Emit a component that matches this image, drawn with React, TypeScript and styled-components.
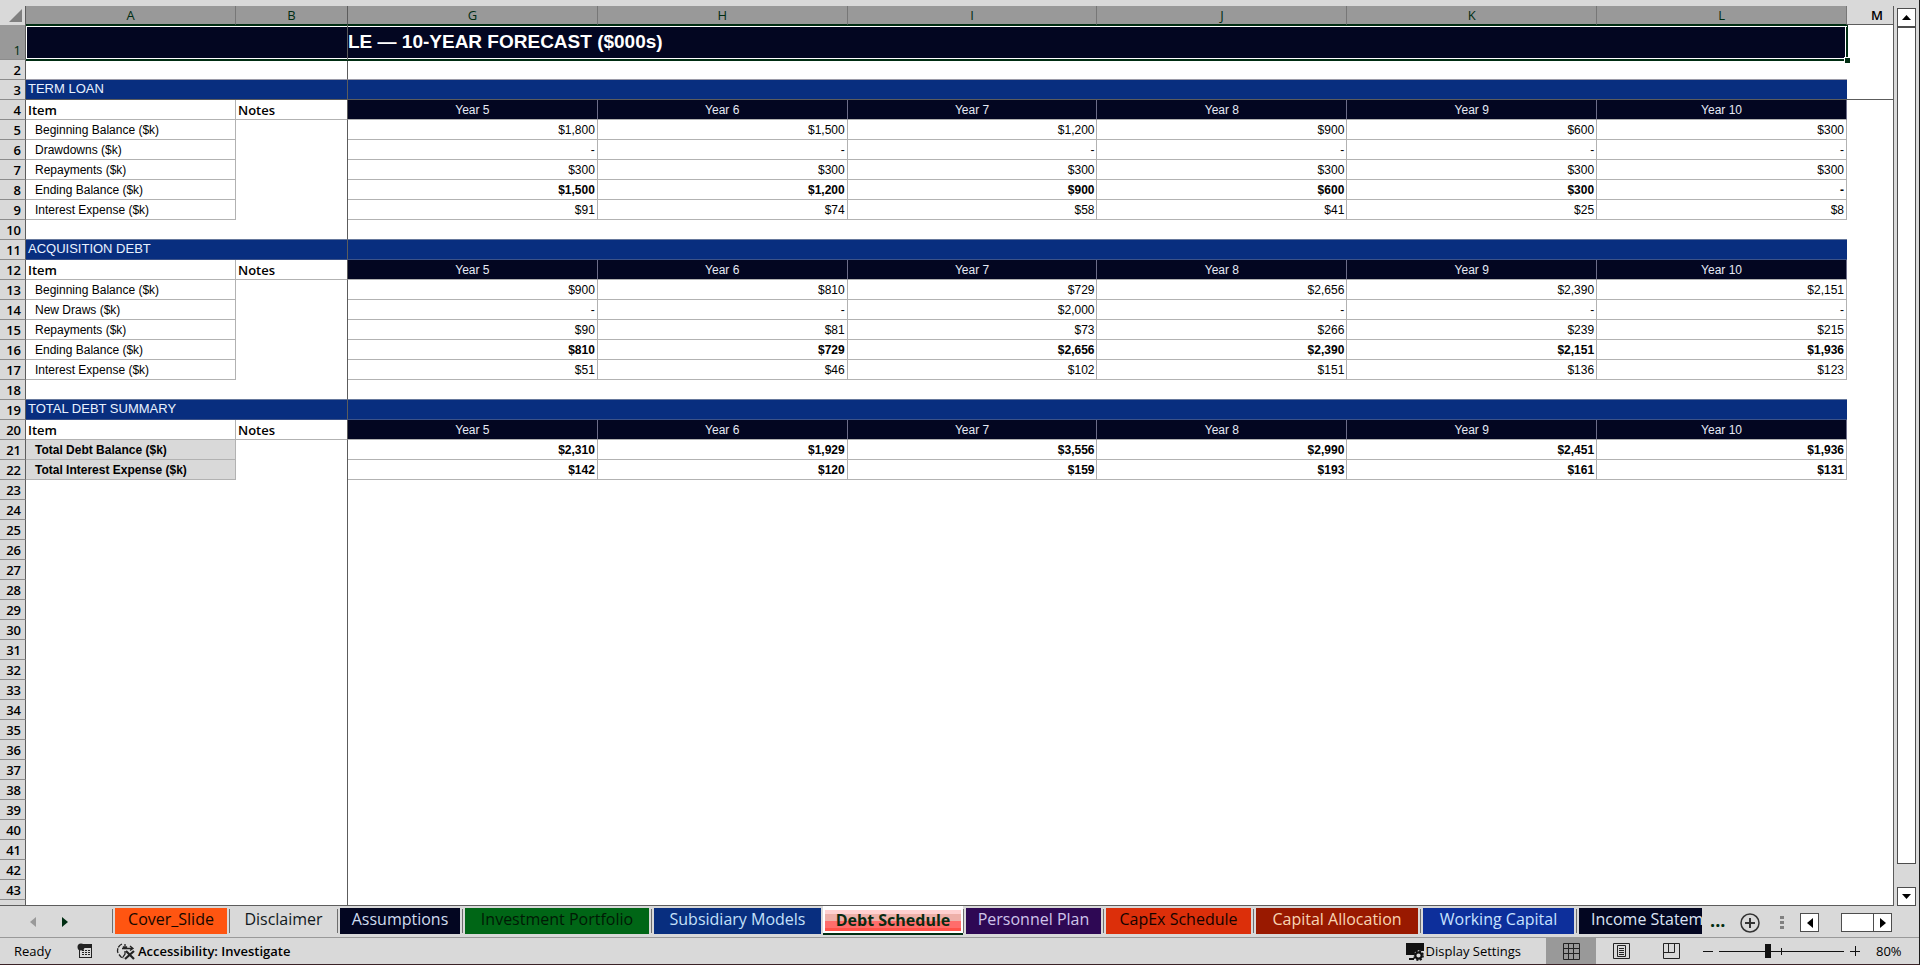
import React from "react";
import styled, { createGlobalStyle } from "styled-components";

const C = {
  chrome: "#d9d9d9",
  head: "#999999",
  navy: "#030621",
  blue: "#082e7f",
  green: "#002d12",
  grid: "#b2b2b2",
  dark: "#5c5c5c",
};
const UI = `"Open Sans", "Noto Sans", sans-serif`;
const CELL = `"Liberation Sans", Arial, sans-serif`;

const GlobalStyle = createGlobalStyle`
  * { box-sizing: border-box; }
  html, body, #root { height: 100%; }
  body { margin: 0; background: ${C.chrome}; font-family: ${UI}; color: #000; overflow: hidden; }
  button { font: inherit; color: inherit; border: 0; padding: 0; background: none; }
`;

const Window = styled.div`
  height: 100vh;
  display: flex;
  flex-direction: column;
  background: ${C.chrome};
  border-right: 1px solid #1c1c1c;
  border-bottom: 1px solid #3a2226;
`;
const Workspace = styled.main`
  flex: 1;
  min-height: 0;
  display: flex;
  padding-top: 6px;
`;
const SheetPane = styled.div`
  flex: 1;
  min-width: 0;
  overflow: hidden;
  border-right: 1px solid ${C.dark};
  border-bottom: 1px solid ${C.dark};
  background: linear-gradient(${C.chrome} 19px, #fff 19px);
`;
const Sheet = styled.table`
  width: 100%;
  table-layout: fixed;
  border-collapse: separate;
  border-spacing: 0;
  font: 12px/18px ${CELL};
`;
const Corner = styled.th`
  height: 19px;
  padding: 0 3px 1px 0;
  background: ${C.chrome};
  border-right: 1px solid ${C.dark};
  text-align: right;
  svg { display: block; margin-left: auto; }
`;
const ColHead = styled.th<{ $on?: boolean; $freeze?: boolean }>`
  height: 19px;
  padding: 1px 0 0 ${(p) => (p.$on ? 0 : 14)}px;
  font: ${(p) => (p.$on ? 400 : 600)} 13px/17px ${UI};
  color: ${(p) => (p.$on ? C.green : "#000")};
  background: ${(p) => (p.$on ? C.head : C.chrome)};
  border-right: ${(p) => (p.$on ? `1px solid ${p.$freeze ? C.dark : "#777"}` : 0)};
  border-bottom: 1px solid ${(p) => (p.$on ? C.green : C.dark)};
`;
const RowHead = styled.th<{ $on?: boolean }>`
  height: ${(p) => (p.$on ? 35 : 20)}px;
  padding: 0 4px 0 0;
  text-align: right;
  vertical-align: bottom;
  font: ${(p) => (p.$on ? 400 : 600)} 13px/18px ${UI};
  color: ${(p) => (p.$on ? C.green : "#000")};
  background: ${(p) => (p.$on ? C.head : C.chrome)};
  border-right: 1px solid ${C.dark};
  border-bottom: 1px solid #8c8c8c;
`;
const Cell = styled.td<{
  $lines?: boolean; $freeze?: boolean; $bold?: boolean; $num?: boolean; $indent?: boolean; $shade?: boolean; $under?: string;
}>`
  height: 20px;
  padding: 1px ${(p) => (p.$num ? 2 : 0)}px 0 ${(p) => (p.$indent ? 9 : 2)}px;
  overflow: hidden;
  white-space: nowrap;
  text-align: ${(p) => (p.$num ? "right" : "left")};
  font-weight: ${(p) => (p.$bold ? 700 : 400)};
  background: ${(p) => (p.$shade ? "#d9d9d9" : "#fff")};
  border-right: ${(p) => (p.$freeze ? `1px solid ${C.dark}` : p.$lines ? `1px solid ${C.grid}` : 0)};
  border-bottom: ${(p) => (p.$under ? `1px solid ${p.$under}` : p.$lines ? `1px solid ${C.grid}` : 0)};
`;
const ItemHead = styled.th<{ $freeze?: boolean }>`
  padding: 1px 0 0 2px;
  text-align: left;
  font: 600 13px/18px ${UI};
  background: #fff;
  border-right: 1px solid ${(p) => (p.$freeze ? C.dark : C.grid)};
  border-bottom: 1px solid ${C.grid};
`;
const YearHead = styled.th`
  padding: 1px 0 0;
  font-weight: 400;
  color: #e6eaf5;
  background: ${C.navy};
  border-right: 1px solid #6c6c88;
  border-bottom: 1px solid ${C.grid};
`;
const Section = styled.td<{ $freeze?: boolean; $cut?: boolean }>`
  padding: 0 0 1px 2px;
  font: 13px/18px ${CELL};
  color: #e8f2ff;
  background: ${C.blue};
  border-right: ${(p) => (p.$freeze ? `1px solid ${C.dark}` : 0)};
  border-bottom: 1px solid ${(p) => (p.$cut ? C.dark : "#3d5388")};
`;
const Title = styled.td<{ $side: "left" | "right" }>`
  position: relative;
  height: 35px;
  padding: 0;
  font: 700 19px/34px ${CELL};
  color: #fff;
  background: ${C.navy};
  vertical-align: top;
  border-right: ${(p) => (p.$side === "left" ? `1px solid ${C.dark}` : 0)};
  box-shadow:
    inset 0 1px 0 ${C.green}, inset 0 2px 0 #fff,
    0 1px 0 ${C.green}, inset 0 -1px 0 ${C.green}, inset 0 -2px 0 #fff,
    ${(p) => (p.$side === "left" ? "inset 1px 0 0 #fff" : `inset -1px 0 0 ${C.green}, inset -2px 0 0 #fff, 1px 0 0 ${C.green}`)};
  z-index: 1;
`;
const FillHandle = styled.span`
  position: absolute;
  right: -3px;
  bottom: -3px;
  width: 6px;
  height: 6px;
  background: ${C.green};
  border-top: 1px solid #fff;
  border-left: 1px solid #fff;
`;

const VScroll = styled.div`
  width: 25px;
  padding: 2px 3px 0;
  display: flex;
  flex-direction: column;
`;
const ArrowBtn = styled.button`
  width: 19px;
  height: 19px;
  flex: none;
  display: grid;
  place-items: center;
  background: #fff;
  border: 1px solid #4d4d4d;
`;
const Thumb = styled.div`
  flex: 1;
  width: 19px;
  background: #fff;
  border: 1px solid #4d4d4d;
  margin-bottom: 23px;
`;

const TabBar = styled.nav`
  height: 32px;
  display: flex;
  align-items: flex-start;
  border-bottom: 1px solid #999;
`;
const TabNav = styled.div`
  flex: none;
  width: 112px;
  height: 32px;
  padding: 0 0 0 30px;
  display: flex;
  gap: 26px;
  align-items: center;
  button { display: grid; }
`;
const Tabs = styled.div`
  flex: 1 1 0;
  min-width: 0;
  display: flex;
  overflow: hidden;
`;
const TabSlot = styled.div<{ $w: number; $bare?: boolean }>`
  flex: none;
  width: ${(p) => p.$w}px;
  height: 30px;
  padding: ${(p) => (p.$bare ? "0" : "2px 2px 0 3px")};
  background: linear-gradient(#6e6e6e, #6e6e6e) left 3px / 1px 24px no-repeat;
`;
const Tab = styled.button<{ $bg: string; $fg: string; $clip?: boolean }>`
  width: 100%;
  height: 26px;
  overflow: hidden;
  white-space: nowrap;
  text-align: ${(p) => (p.$clip ? "left" : "center")};
  font: 16px/22px ${UI};
  padding: 0 0 4px ${(p) => (p.$clip ? 12 : 0)}px;
  color: ${(p) => p.$fg};
  background: ${(p) => p.$bg};
`;
const ActiveTab = styled.button`
  width: 100%;
  height: 28px;
  margin-top: -1px;
  padding-bottom: 2px;
  font: 700 16px/18px ${UI};
  color: #092b12;
  background: linear-gradient(#ffd0d0 4px, #eeb0a9 4px 11px, #ff6d6b 11px 18px, #ff5148 18px);
  background-clip: padding-box;
  border: 2px solid #fff;
  border-top-width: 5px;
  border-bottom-width: 2px;
  box-shadow: 0 2px 0 ${C.green};
  white-space: nowrap;
`;
const TabTools = styled.div`
  flex: none;
  width: 217px;
  height: 31px;
  padding: 2px 0 0 8px;
  display: flex;
  align-items: center;
`;
const More = styled.button`
  width: 30px;
  padding-bottom: 6px;
  text-align: left;
  font: 700 18px/20px ${UI};
  color: ${C.green};
`;
const RoundBtn = styled.button`
  display: grid;
`;
const Dots = styled.span`
  display: grid;
  width: 40px;
  padding-left: 20px;
`;
const HTrack = styled.div`
  flex: none;
  display: flex;
  margin-left: 22px;
`;
const HThumb = styled.div`
  width: 32px;
  height: 19px;
  background: #fff;
  border: 1px solid #4d4d4d;
  border-right: 0;
`;

const Status = styled.footer`
  height: 26px;
  display: flex;
  align-items: center;
  font: 13px/20px ${UI};
`;
const Ready = styled.span`
  width: 77px;
  padding-left: 14px;
`;
const StatusBtn = styled.button<{ $bold?: boolean }>`
  display: flex;
  align-items: center;
  gap: 2px;
  font-weight: ${(p) => (p.$bold ? 600 : 400)};
  margin-left: ${(p) => (p.$bold ? 23 : 0)}px;
  white-space: nowrap;
`;
const Spacer = styled.div`
  flex: 1;
`;
const Views = styled.div`
  display: flex;
  align-self: stretch;
  margin-left: 25px;
`;
const ViewBtn = styled.button<{ $on?: boolean }>`
  width: 50px;
  display: grid;
  place-items: center;
  background: ${(p) => (p.$on ? C.head : "transparent")};
`;
const Zoom = styled.div`
  display: flex;
  align-items: center;
  gap: 6px;
  margin-left: 7px;
  button { display: grid; }
  input {
    appearance: none;
    width: 125px;
    height: 15px;
    margin: 0;
    background:
      linear-gradient(#111, #111) 62px center / 1px 7px no-repeat,
      linear-gradient(#111, #111) center / 100% 1px no-repeat;
  }
  input::-webkit-slider-thumb {
    appearance: none;
    width: 6px;
    height: 14px;
    background: #111;
  }
`;
const Percent = styled.button`
  width: 59px;
  text-align: left;
  padding-left: 16px;
`;

type Dir = "up" | "down" | "left" | "right";
const shapes: Record<Dir, [number, number, string]> = {
  up: [9, 5, "M0 5L4.5 0L9 5Z"],
  down: [9, 5, "M0 0L4.5 5L9 0Z"],
  left: [6, 10, "M6 0L0 5L6 10Z"],
  right: [6, 10, "M0 0L6 5L0 10Z"],
};
const Arrow = ({ dir, color = "#000" }: { dir: Dir; color?: string }) => {
  const [w, h, d] = shapes[dir];
  return <svg width={w} height={h} viewBox={`0 0 ${w} ${h}`}><path d={d} fill={color} /></svg>;
};

const MacroIcon = () => (
  <svg width="16" height="16" viewBox="0 0 16 16">
    <rect x="2.5" y="2.5" width="12" height="12" fill="none" stroke="#222" />
    <rect x="5" y="1" width="10" height="4" fill="#222" />
    <circle cx="4" cy="4" r="3.5" fill="#222" />
    <path d="M5 7.5h2m1 0h2m1 0h2M5 9.500h2m1 0h2m1 0h2M5 11.500h2m1 0h2m1 0h2" stroke="#222" />
  </svg>
);
const AccessIcon = () => (
  <svg width="20" height="18" viewBox="0 0 20 18" fill="none" stroke="#222" strokeWidth="1.3">
    <path d="M6 2A7 7 0 0 0 2 11M3 12.500l2 2.500l3 1" strokeDasharray="5 1" />
    <path d="M6 6.500h11M9 2v4M7 4.500l2 2l2-2M14 4l3 2.500l-3 2M9 9v3l-2 3" />
    <path d="M10 9l8 8M18 9l-9 8" strokeWidth="2.200" />
  </svg>
);
const DisplayIcon = () => (
  <svg width="19" height="19" viewBox="0 0 19 19">
    <path d="M1 1h18v8h-3l-2-1l-4 2l-1 3H1Z" fill="#111" />
    <path d="M4 17h5" stroke="#111" strokeWidth="2" />
    <circle cx="13.500" cy="13.500" r="3.200" fill="none" stroke="#111" strokeWidth="2.200" />
    <circle cx="13.500" cy="13.500" r="4.600" fill="none" stroke="#111" strokeWidth="1.600" strokeDasharray="2.100 1.510" />
  </svg>
);

const years = ["Year 5", "Year 6", "Year 7", "Year 8", "Year 9", "Year 10"];
type Line = { label: string; values: string[]; bold?: boolean; shade?: boolean };
type Block = { name: string; start: number; lines: Line[] };
const blocks: Block[] = [
  {
    name: "TERM LOAN", start: 3, lines: [
      { label: "Beginning Balance ($k)", values: ["$1,800", "$1,500", "$1,200", "$900", "$600", "$300"] },
      { label: "Drawdowns ($k)", values: ["-", "-", "-", "-", "-", "-"] },
      { label: "Repayments ($k)", values: ["$300", "$300", "$300", "$300", "$300", "$300"] },
      { label: "Ending Balance ($k)", values: ["$1,500", "$1,200", "$900", "$600", "$300", "-"], bold: true },
      { label: "Interest Expense ($k)", values: ["$91", "$74", "$58", "$41", "$25", "$8"] },
    ],
  },
  {
    name: "ACQUISITION DEBT", start: 11, lines: [
      { label: "Beginning Balance ($k)", values: ["$900", "$810", "$729", "$2,656", "$2,390", "$2,151"] },
      { label: "New Draws ($k)", values: ["-", "-", "$2,000", "-", "-", "-"] },
      { label: "Repayments ($k)", values: ["$90", "$81", "$73", "$266", "$239", "$215"] },
      { label: "Ending Balance ($k)", values: ["$810", "$729", "$2,656", "$2,390", "$2,151", "$1,936"], bold: true },
      { label: "Interest Expense ($k)", values: ["$51", "$46", "$102", "$151", "$136", "$123"] },
    ],
  },
  {
    name: "TOTAL DEBT SUMMARY", start: 19, lines: [
      { label: "Total Debt Balance ($k)", values: ["$2,310", "$1,929", "$3,556", "$2,990", "$2,451", "$1,936"], bold: true, shade: true },
      { label: "Total Interest Expense ($k)", values: ["$142", "$120", "$159", "$193", "$161", "$131"], bold: true, shade: true },
    ],
  },
];

const BlankRow = ({ n, under }: { n?: number; under?: string }) => (
  <tr>
    <RowHead scope="row">{n}</RowHead>
    <Cell colSpan={2} $freeze $under={under} />
    <Cell colSpan={6} $under={under} />
    <Cell />
  </tr>
);

const BlockRows = ({ block }: { block: Block }) => (
  <>
    <tr>
      <RowHead scope="row">{block.start}</RowHead>
      <Section colSpan={2} $freeze $cut={block.start === 3}>{block.name}</Section>
      <Section colSpan={6} $cut={block.start === 3} />
      <Cell $under={block.start === 3 ? C.dark : undefined} />
    </tr>
    <tr>
      <RowHead scope="row">{block.start + 1}</RowHead>
      <ItemHead>Item</ItemHead>
      <ItemHead $freeze>Notes</ItemHead>
      {years.map((y) => <YearHead key={y}>{y}</YearHead>)}
      <Cell />
    </tr>
    {block.lines.map((l, i) => (
      <tr key={l.label}>
        <RowHead scope="row">{block.start + 2 + i}</RowHead>
        <Cell $lines $indent $bold={l.shade} $shade={l.shade}>{l.label}</Cell>
        <Cell $freeze />
        {l.values.map((v, j) => <Cell key={j} $lines $num $bold={l.bold}>{v}</Cell>)}
        <Cell />
      </tr>
    ))}
  </>
);

const tabs = [
  { name: "Cover_Slide", w: 117, bg: "#ff5511", fg: "#140700" },
  { name: "Disclaimer", w: 108, bg: "transparent", fg: "#101820" },
  { name: "Assumptions", w: 125, bg: C.navy, fg: "#cfdcf0" },
  { name: "Investment Portfolio", w: 189, bg: "#006616", fg: "#001a05" },
  { name: "Subsidiary Models", w: 172, bg: C.blue, fg: "#c4e0fa" },
  { name: "Debt Schedule", w: 140, active: true, bg: "", fg: "" },
  { name: "Personnel Plan", w: 140, bg: "#2e0854", fg: "#cfc4ea" },
  { name: "CapEx Schedule", w: 150, bg: "#dc2f0a", fg: "#140300" },
  { name: "Capital Allocation", w: 167, bg: "#991900", fg: "#f8d5b4" },
  { name: "Working Capital", w: 156, bg: "#0d2f9b", fg: "#c8e2ff" },
  { name: "Income Statem", w: 128, bg: C.navy, fg: "#dce4f4", clip: true },
];

export default function App() {
  return (
    <Window>
      <GlobalStyle />
      <Workspace>
        <SheetPane>
          <Sheet>
            <colgroup>
              <col style={{ width: 26 }} />
              <col style={{ width: 210 }} />
              <col style={{ width: 112 }} />
              {years.map((y) => <col key={y} />)}
              <col style={{ width: 46 }} />
            </colgroup>
            <thead>
              <tr>
                <Corner aria-label="Select all">
                  <svg width="13" height="13" viewBox="0 0 13 13"><path d="M13 0V13H0Z" fill="#808080" /></svg>
                </Corner>
                {["A", "B", "G", "H", "I", "J", "K", "L"].map((c) => (
                  <ColHead key={c} scope="col" $on $freeze={c === "B"}>{c}</ColHead>
                ))}
                <ColHead scope="col">M</ColHead>
              </tr>
            </thead>
            <tbody>
              <tr>
                <RowHead scope="row" $on>1</RowHead>
                <Title colSpan={2} $side="left" />
                <Title colSpan={6} $side="right">LE — 10-YEAR FORECAST ($000s)<FillHandle /></Title>
                <Cell />
              </tr>
              <BlankRow n={2} under="#9a9aa8" />
              <BlockRows block={blocks[0]} />
              <BlankRow n={10} under="#66789c" />
              <BlockRows block={blocks[1]} />
              <BlankRow n={18} under="#66789c" />
              <BlockRows block={blocks[2]} />
              {Array.from({ length: 21 }, (_, i) => <BlankRow key={i} n={23 + i} />)}
              <BlankRow />
            </tbody>
          </Sheet>
        </SheetPane>
        <VScroll>
          <ArrowBtn aria-label="Scroll up"><Arrow dir="up" /></ArrowBtn>
          <Thumb />
          <ArrowBtn aria-label="Scroll down"><Arrow dir="down" /></ArrowBtn>
        </VScroll>
      </Workspace>
      <TabBar>
        <TabNav>
          <button aria-label="Previous sheet"><Arrow dir="left" color="#999" /></button>
          <button aria-label="Next sheet"><Arrow dir="right" color={C.green} /></button>
        </TabNav>
        <Tabs>
          {tabs.map((t) => (
            <TabSlot key={t.name} $w={t.w} $bare={t.active}>
              {t.active
                ? <ActiveTab aria-current="page">{t.name}</ActiveTab>
                : <Tab $bg={t.bg} $fg={t.fg} $clip={t.clip}>{t.name}</Tab>}
            </TabSlot>
          ))}
        </Tabs>
        <TabTools>
          <More aria-label="More sheets">...</More>
          <RoundBtn aria-label="New sheet">
            <svg width="20" height="20" viewBox="0 0 20 20" fill="none" stroke="#333">
              <circle cx="10" cy="10" r="9" strokeWidth="1.500" /><path d="M10 5v10M5 10h10" strokeWidth="2" />
            </svg>
          </RoundBtn>
          <Dots>
            <svg width="4" height="13" viewBox="0 0 4 13" fill="#808080">
              <path d="M0 0h4v3H0zM0 5h4v3H0zM0 10h4v3H0z" />
            </svg>
          </Dots>
          <ArrowBtn aria-label="Scroll left"><Arrow dir="left" /></ArrowBtn>
          <HTrack>
            <HThumb />
            <ArrowBtn aria-label="Scroll right"><Arrow dir="right" /></ArrowBtn>
          </HTrack>
        </TabTools>
      </TabBar>
      <Status>
        <Ready>Ready</Ready>
        <StatusBtn aria-label="Record macro"><MacroIcon /></StatusBtn>
        <StatusBtn $bold><AccessIcon />Accessibility: Investigate</StatusBtn>
        <Spacer />
        <StatusBtn><DisplayIcon />Display Settings</StatusBtn>
        <Views>
          <ViewBtn $on aria-label="Normal view">
            <svg width="17" height="17" viewBox="0 0 17 17" fill="none" stroke="#222"><path d="M.5.5h16v16H.5zM5.500 .5v16M10.500 .5v16M.5 5.500h16M.5 10.500h16" /></svg>
          </ViewBtn>
          <ViewBtn aria-label="Page layout view">
            <svg width="17" height="16" viewBox="0 0 17 16" fill="none" stroke="#222"><path d="M.5.5h16v15H.5zM4.500 2.500h8v11h-8zM6 5.500h5M6 7.500h5M6 9.500h5M6 11.500h5" /></svg>
          </ViewBtn>
          <ViewBtn aria-label="Page break preview">
            <svg width="17" height="16" viewBox="0 0 17 16" fill="none" stroke="#222"><path d="M.5.5h16v15H.5zM5.500 .5v9M11.500 .5v9h-11" /></svg>
          </ViewBtn>
        </Views>
        <Zoom>
          <button aria-label="Zoom out"><svg width="10" height="10" viewBox="0 0 10 10"><path d="M0 5.500h10" stroke="#111" /></svg></button>
          <input type="range" aria-label="Zoom" min={0} max={100} defaultValue={39} />
          <button aria-label="Zoom in"><svg width="10" height="10" viewBox="0 0 10 10"><path d="M0 5.500h10M5.500 0v10" stroke="#111" /></svg></button>
        </Zoom>
        <Percent>80%</Percent>
      </Status>
    </Window>
  );
}
